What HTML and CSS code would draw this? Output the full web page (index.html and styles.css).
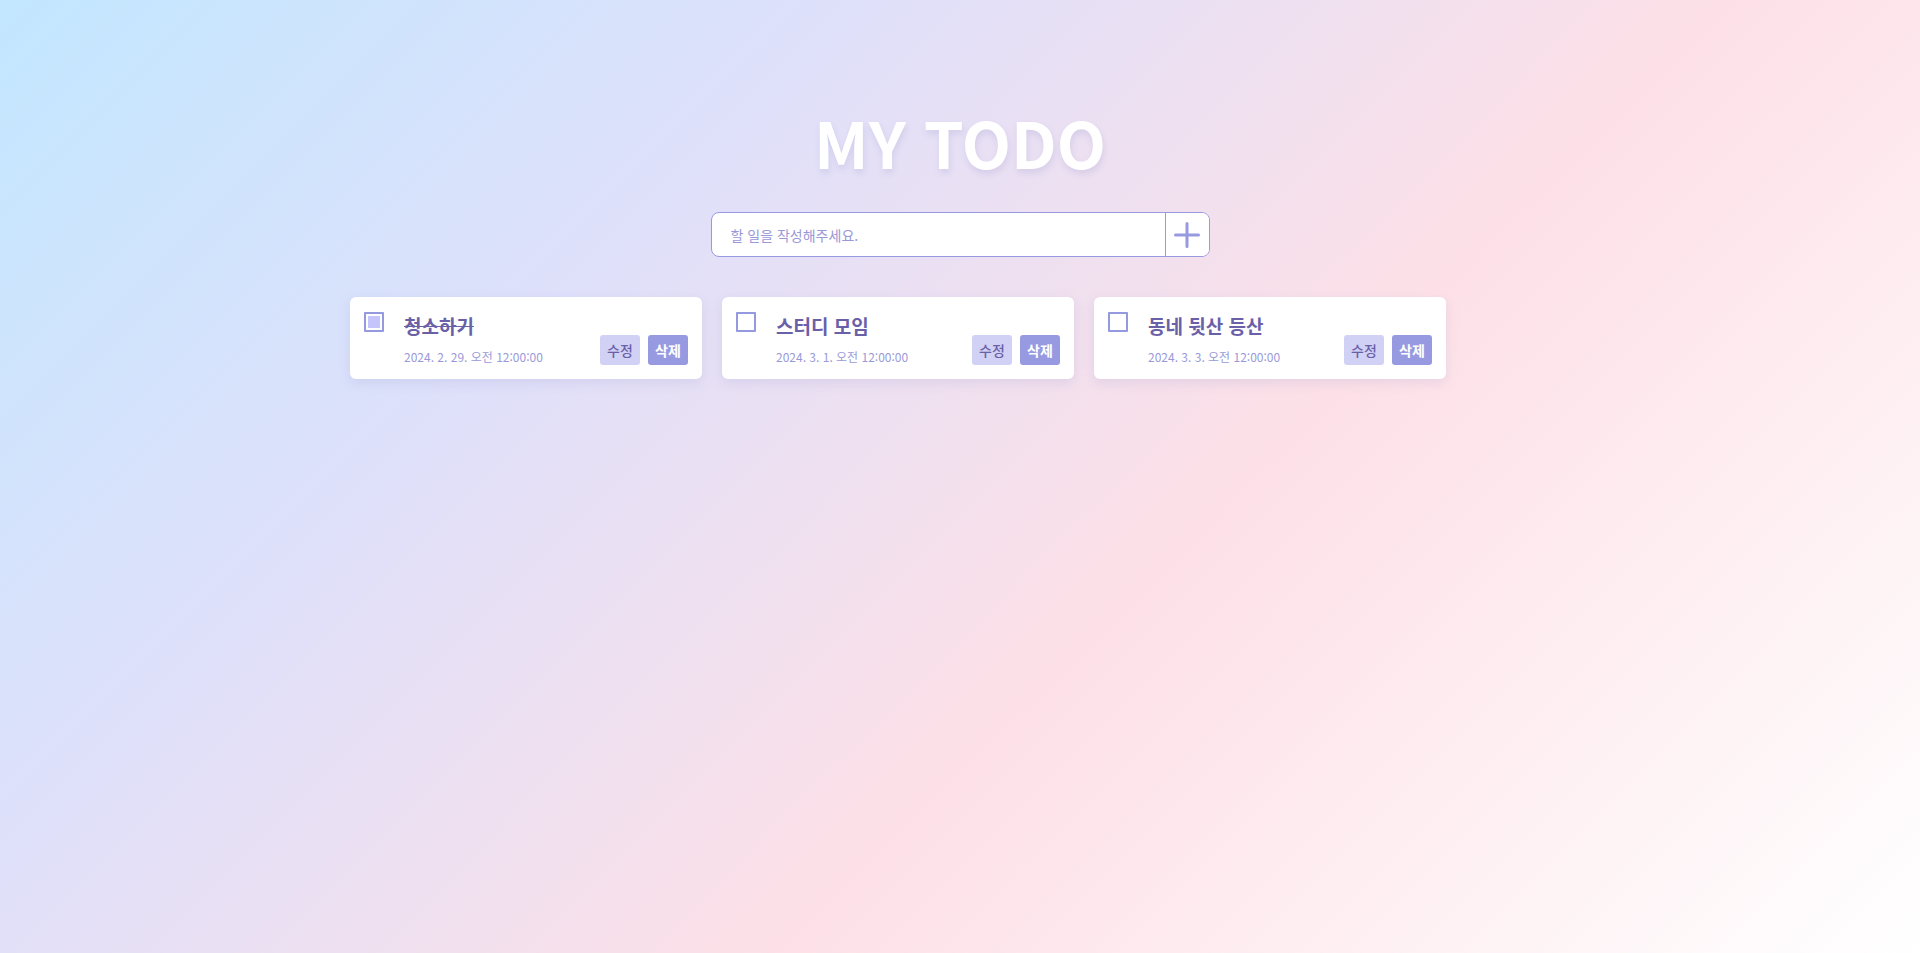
FILE: index.html
```html
<!DOCTYPE html>
<html lang="ko">
<head>
<meta charset="utf-8">
<title>MY TODO</title>
<link rel="stylesheet" href="styles.css">
</head>
<body>
<main class="app">
  <h1 class="title">MY TODO</h1>
  <form class="add-form" onsubmit="return false">
    <input class="add-input" type="text" placeholder="할 일을 작성해주세요.">
    <button class="add-btn" type="button" aria-label="추가">
      <svg width="26" height="26" viewBox="0 0 26 26"><path d="M13 1.5V24.5M1.5 13H24.5" stroke="#979ae0" stroke-width="3" stroke-linecap="round" fill="none"/></svg>
    </button>
  </form>
  <ul class="todo-list">
    <li class="card">
      <input class="check" type="checkbox" checked>
      <div class="text">
        <div class="todo-title done">청소하기</div>
        <div class="date">2024. 2. 29. 오전 12:00:00</div>
      </div>
      <div class="actions">
        <button class="btn edit" type="button">수정</button>
        <button class="btn del" type="button">삭제</button>
      </div>
    </li>
    <li class="card">
      <input class="check" type="checkbox">
      <div class="text">
        <div class="todo-title">스터디 모임</div>
        <div class="date">2024. 3. 1. 오전 12:00:00</div>
      </div>
      <div class="actions">
        <button class="btn edit" type="button">수정</button>
        <button class="btn del" type="button">삭제</button>
      </div>
    </li>
    <li class="card">
      <input class="check" type="checkbox">
      <div class="text">
        <div class="todo-title">동네 뒷산 등산</div>
        <div class="date">2024. 3. 3. 오전 12:00:00</div>
      </div>
      <div class="actions">
        <button class="btn edit" type="button">수정</button>
        <button class="btn del" type="button">삭제</button>
      </div>
    </li>
  </ul>
</main>
</body>
</html>
```

FILE: styles.css
```css
* { box-sizing: border-box; }
html, body { margin: 0; padding: 0; height: 100%; }
body {
  font-family: "Noto Sans CJK KR", "Noto Sans", sans-serif;
  background: linear-gradient(135deg, #c2e7ff 0%, #dfe0fa 30%, #fde0e7 60%, #ffffff 100%);
  min-height: 953px;
}
.app {
  display: flex;
  flex-direction: column;
  align-items: center;
  padding-top: 100px;
}
.title {
  margin: 0 0 30px;
  font-size: 64px;
  line-height: 82px;
  font-weight: 700;
  color: #ffffff;
  text-shadow: 1px 4px 6px rgba(120, 120, 190, 0.18);
  letter-spacing: 0;
}
.add-form {
  display: flex;
  width: 499px;
  height: 45px;
  border: 1px solid #979ae0;
  border-radius: 8px;
  background: #fff;
  overflow: hidden;
}
.add-input {
  flex: 1;
  border: 0;
  outline: none;
  padding: 0 19px;
  font-family: inherit;
  font-size: 14px;
  color: #6b60a8;
  background: transparent;
}
.add-input::placeholder { color: #9a98d8; }
.add-btn {
  width: 44px;
  border: 0;
  border-left: 1px solid #979ae0;
  background: #fff;
  padding: 0;
  display: flex;
  align-items: center;
  justify-content: center;
}
.todo-list {
  list-style: none;
  margin: 40px 0 0;
  padding: 0;
  width: 1220px;
  display: flex;
  flex-wrap: wrap;
  gap: 20px;
}
.card {
  width: 352px;
  height: 82px;
  display: flex;
  padding: 15px 14px 14px;
  background: #fff;
  border-radius: 6px;
  box-shadow: 0 4px 12px rgba(140, 140, 200, 0.18);
}
.check {
  appearance: none;
  -webkit-appearance: none;
  margin: 0 20px 0 0;
  width: 20px;
  height: 20px;
  flex: none;
  border: 2px solid #9599e0;
  border-radius: 1px;
  background: #fff;
}
.check:checked {
  background: #c5c5fb;
  box-shadow: inset 0 0 0 2px #fff;
}
.text {
  flex: 1;
  display: flex;
  flex-direction: column;
  min-width: 0;
}
.todo-title {
  font-size: 19px;
  line-height: 28px;
  font-weight: 700;
  color: #6a60a7;
}
.todo-title.done { text-decoration: line-through; }
.date {
  margin-top: 8px;
  font-size: 12px;
  line-height: 18px;
  color: #9a9ad9;
}
.actions {
  align-self: flex-end;
  display: flex;
  gap: 8px;
}
.btn {
  width: 40px;
  height: 30px;
  border: 0;
  border-radius: 3px;
  padding: 0;
  font-family: inherit;
  font-size: 14px;
  font-weight: 500;
}
.btn.edit { background: #d1d1f5; color: #6a60a7; }
.btn.del { background: #979ae0; color: #fff; font-weight: 700; }
```
